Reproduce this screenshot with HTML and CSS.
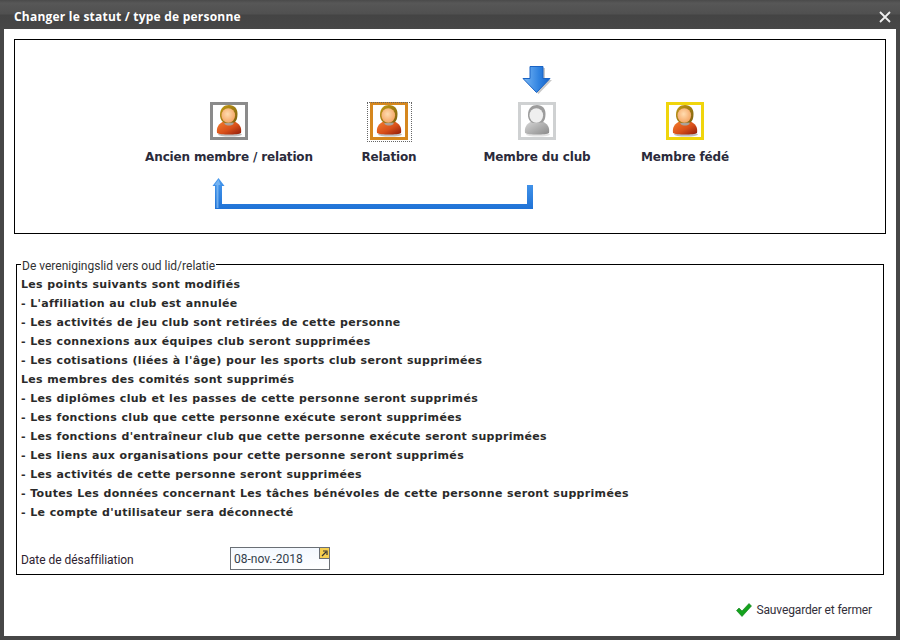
FILE: index.html
```html
<!DOCTYPE html>
<html lang="fr">
<head>
<meta charset="utf-8">
<title>Changer le statut / type de personne</title>
<link rel="stylesheet" href="styles.css">
</head>
<body>
<svg class="defs" width="0" height="0" aria-hidden="true">
  <defs>
    <linearGradient id="shirt" x1="0" y1="0" x2="1" y2="1"><stop offset="0" stop-color="#f5802f"/><stop offset=".55" stop-color="#d9501a"/><stop offset="1" stop-color="#8e1a0a"/></linearGradient>
    <radialGradient id="skin" cx=".45" cy=".4" r=".7"><stop offset="0" stop-color="#ffdcb0"/><stop offset="1" stop-color="#f29c58"/></radialGradient>
    <linearGradient id="hair" x1="0" y1="0" x2="1" y2="1"><stop offset="0" stop-color="#c29a14"/><stop offset="1" stop-color="#7d5f10"/></linearGradient>
    <linearGradient id="shirtg" x1="0" y1="0" x2="1" y2="1"><stop offset="0" stop-color="#d8d8d8"/><stop offset="1" stop-color="#8a8a8a"/></linearGradient>
    <linearGradient id="arrow" x1="0" y1="0" x2="1" y2="0"><stop offset="0" stop-color="#7ab8f5"/><stop offset=".6" stop-color="#2f82e0"/><stop offset="1" stop-color="#1462c8"/></linearGradient>
    <linearGradient id="band" x1="0" y1="0" x2="0" y2="1"><stop offset="0" stop-color="#4a9bee"/><stop offset="1" stop-color="#1f72d6"/></linearGradient>
    <symbol id="person" viewBox="0 0 32 32">
      <ellipse cx="17" cy="29.500" rx="12" ry="2" fill="#bdbdbd"/>
      <path d="M4 28c-.8-5.500 1.500-10 8-12h8c6.500 2 9 6.500 8 12-3 2-21 2-24 0z" fill="url(#shirt)"/>
      <path d="M11.500 16h9v3c-2.500 2-6.500 2-9 0z" fill="#a9a29a"/>
      <path d="M7 10C7 3 11 0 16 0c5.500 0 8.500 3.500 8.500 9 0 4-1 7-3 8.500L12 18c-3-1-5-4-5-8z" fill="url(#hair)"/>
      <ellipse cx="15.300" cy="10.500" rx="6.800" ry="7.300" fill="url(#skin)"/>
    </symbol>
    <symbol id="person-grey" viewBox="0 0 32 32">
      <ellipse cx="17" cy="29.500" rx="12" ry="2" fill="#e2e2e2"/>
      <path d="M4 28c-.8-5.500 1.500-10 8-12h8c6.500 2 9 6.500 8 12-3 2-21 2-24 0z" fill="url(#shirtg)"/>
      <path d="M7 10C7 3 11 0 16 0c5.500 0 8.500 3.500 8.500 9 0 4-1 7-3 8.500L12 18c-3-1-5-4-5-8z" fill="#9c9c9c"/>
      <ellipse cx="15.300" cy="10.500" rx="6.800" ry="7.300" fill="#efefef"/>
    </symbol>
  </defs>
</svg>
<main class="window">
  <header class="titlebar">
    <h1 class="title">Changer le statut / type de personne</h1>
    <svg class="close" width="12" height="12" viewBox="0 0 12 12" aria-label="Fermer"><path d="M1 1l10 10M11 1L1 11" stroke="#eee" stroke-width="1.800" fill="none"/></svg>
  </header>
  <div class="content">
    <section class="diagram">
      <svg class="arrow-down" width="30" height="28" viewBox="0 0 30 28">
        <path d="M10 2h13v12h7L16.500 28 3 14h7z" fill="#9a9a9a" opacity=".55"/>
        <path d="M8 .5h13v12h7L14.500 26.500 1 12.500h7z" fill="url(#arrow)" stroke="#1a63c4" stroke-width="1"/>
      </svg>
      <svg class="route" width="322" height="31" viewBox="0 0 322 31">
        <path d="M6.500 0L0.500 8H3v23h318V7h-6v19H10V8h2.500z" fill="url(#band)"/>
        <path d="M6.500 1.500L2.500 7H4.500v23h2V7h2z" fill="#8cc2f5" opacity=".7"/>
      </svg>
      <figure class="node node-old">
        <span class="avatar avatar-old"><svg class="person"><use href="#person"/></svg></span>
        <figcaption class="node-label">Ancien membre / relation</figcaption>
      </figure>
      <figure class="node node-rel">
        <span class="avatar avatar-rel"><svg class="person"><use href="#person"/></svg></span>
        <figcaption class="node-label">Relation</figcaption>
      </figure>
      <figure class="node node-club">
        <span class="avatar avatar-club"><svg class="person"><use href="#person-grey"/></svg></span>
        <figcaption class="node-label">Membre du club</figcaption>
      </figure>
      <figure class="node node-fed">
        <span class="avatar avatar-fed"><svg class="person"><use href="#person"/></svg></span>
        <figcaption class="node-label">Membre fédé</figcaption>
      </figure>
    </section>
    <fieldset class="changes">
      <legend class="changes-legend">De verenigingslid vers oud lid/relatie</legend>
      <ul class="change-list">
        <li>Les points suivants sont modifiés</li>
        <li>- L'affiliation au club est annulée</li>
        <li>- Les activités de jeu club sont retirées de cette personne</li>
        <li>- Les connexions aux équipes club seront supprimées</li>
        <li>- Les cotisations (liées à l'âge) pour les sports club seront supprimées</li>
        <li>Les membres des comités sont supprimés</li>
        <li>- Les diplômes club et les passes de cette personne seront supprimés</li>
        <li>- Les fonctions club que cette personne exécute seront supprimées</li>
        <li>- Les fonctions d'entraîneur club que cette personne exécute seront supprimées</li>
        <li>- Les liens aux organisations pour cette personne seront supprimés</li>
        <li>- Les activités de cette personne seront supprimées</li>
        <li>- Toutes Les données concernant Les tâches bénévoles de cette personne seront supprimées</li>
        <li>- Le compte d'utilisateur sera déconnecté</li>
      </ul>
      <div class="date-row">
        <label class="date-label" for="date">Date de désaffiliation</label>
        <div class="date-field">
          <span id="date" class="date-value">08-nov.-2018</span>
          <span class="date-btn"><svg width="7" height="7" viewBox="0 0 7 7"><path d="M1 6l4-4M2 1h4v4" stroke="#333" stroke-width="1.200" fill="none"/></svg></span>
        </div>
      </div>
    </fieldset>
    <footer class="actions">
      <svg width="16" height="14" viewBox="0 0 16 14"><path d="M0.500 7.500L3 5l3 3 7-7.500 2.500 2.500L6 13.500z" fill="#14a31e" stroke="#0c7a14" stroke-width=".6"/></svg>
      <span class="save">Sauvegarder et fermer</span>
    </footer>
  </div>
</main>
</body>
</html>
```
FILE: styles.css
```css
* { box-sizing: border-box; }
html, body { margin: 0; padding: 0; }
body { width: 900px; height: 640px; overflow: hidden; background: #474747; }
.defs { position: absolute; }
.window { width: 900px; height: 640px; display: flex; flex-direction: column; padding: 0 4px 4px; background: #474747; }
.titlebar { height: 29px; margin: 0 -4px; padding: 3px 9px 0 14px; display: flex; align-items: center; justify-content: space-between; background: linear-gradient(#4a4a4a 0, #575757 3px, #505050 14px, #444 15px, #474747 100%); flex: none; }
.title { margin: 0; font: 700 12px "Open Sans", sans-serif; color: #fff; letter-spacing: 0.22px; }
.close { flex: none; margin-top: 1px; }
.content { flex: 1; background: #fff; padding: 10px 10px 0; display: flex; flex-direction: column; }
.diagram { position: relative; height: 195px; border: 1px solid #000; flex: none; background: #fff; }
.arrow-down { position: absolute; left: 507px; top: 26px; }
.route { position: absolute; left: 197px; top: 138px; }
.node { position: absolute; top: 62px; margin: 0; width: 200px; margin-left: -100px; display: flex; flex-direction: column; align-items: center; }
.node-old { left: 214px; }
.node-rel { left: 374px; }
.node-club { left: 522px; }
.node-fed { left: 670px; }
.avatar { position: relative; width: 38px; height: 38px; border: 3px solid #888; display: flex; align-items: center; justify-content: center; background: #fff; }
.avatar-old { border-color: #8b8b8b; }
.avatar-rel { border-color: #d5871e; }
.avatar-rel::after { content: ""; position: absolute; left: -6px; right: -7px; top: -3px; bottom: -5px; border: 1px dotted #666; }
.avatar-club { border-color: #cfd1d2; }
.avatar-fed { border-color: #f0d50c; }
.person { width: 32px; height: 32px; }
.node-label { margin-top: 9px; font: 700 12px/16px "DejaVu Sans", sans-serif; letter-spacing: -0.15px; color: #2b2b3b; white-space: nowrap; }
.changes { margin: 20px 2px 0; padding: 0 4px; border: 1px solid #000; height: 321px; flex: none; min-width: 0; }
.changes-legend { margin-left: 0; padding: 4px 1px 0; font: 12px/16px Roboto, sans-serif; color: #333; }
.change-list { list-style: none; margin: 1px 0 0; padding: 0; }
.change-list li { height: 19px; font: 700 11px/19px "DejaVu Sans", sans-serif; letter-spacing: 0.32px; word-spacing: 0.2px; color: #2a2a2a; white-space: nowrap; }
.date-row { display: flex; align-items: center; margin-top: 25px; }
.date-label { width: 209px; padding-top: 3px; font: 12px/16px Roboto, sans-serif; letter-spacing: -0.04px; color: #2e2230; }
.date-field { position: relative; width: 100px; height: 23px; border: 1px solid #6a6f75; background: linear-gradient(#f3f8fe, #fff); padding-left: 3px; font: 12px/22px Roboto, sans-serif; color: #333e4c; }
.date-btn { position: absolute; right: -1px; top: -1px; width: 11px; height: 12px; background: #f6cf50; border: 1px solid #6a6f75; display: flex; align-items: center; justify-content: center; }
.actions { display: flex; align-items: center; justify-content: flex-end; gap: 4px; padding: 27px 14px 0 0; }
.save { font: 12px/16px Roboto, sans-serif; letter-spacing: -0.14px; color: #33303a; }
```
